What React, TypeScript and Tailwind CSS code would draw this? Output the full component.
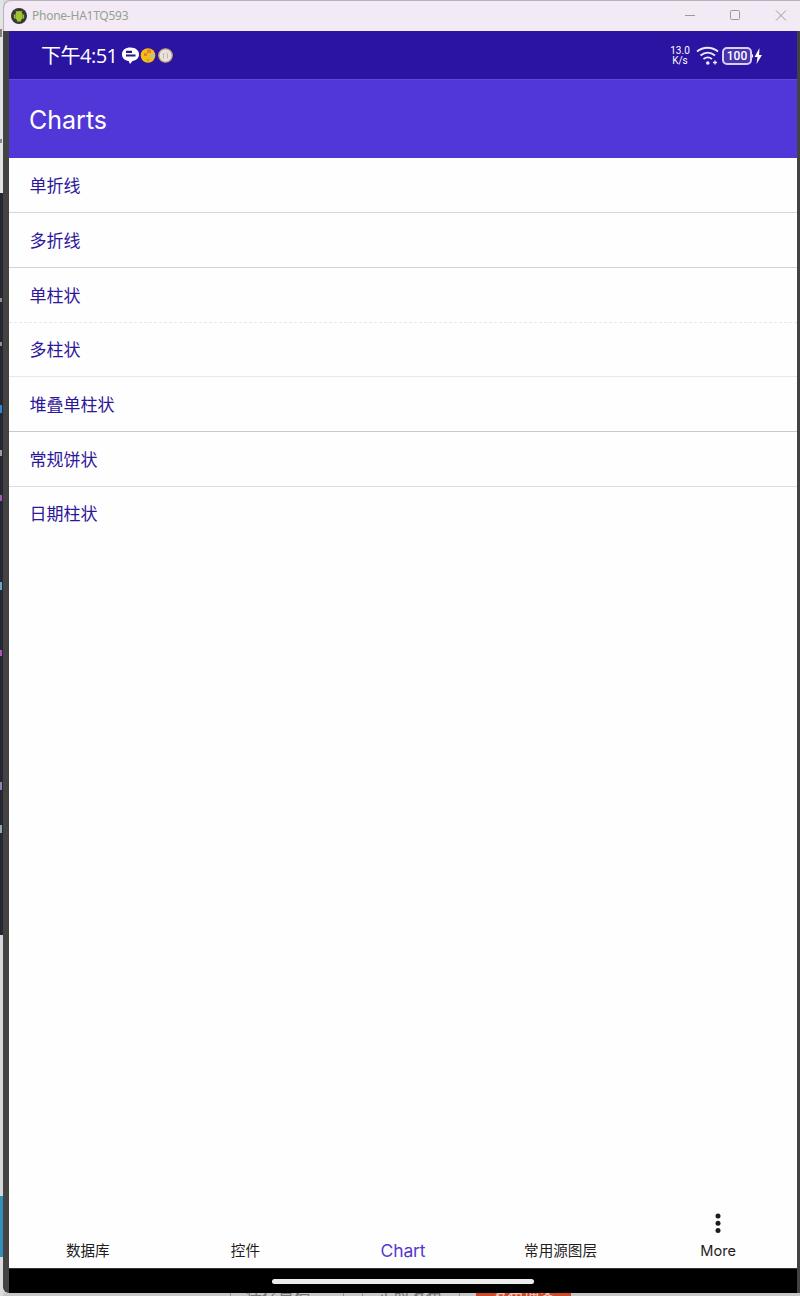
import { clsx } from "clsx";
import type { ReactNode } from "react";

const charts = [
  { label: "单折线", height: "h-[55px]", line: "border-[#d6d6d8]" },
  { label: "多折线", height: "h-[55px]", line: "border-[#d4d4d8]" },
  { label: "单柱状", height: "h-[55px]", line: "border-dashed border-[#e8e6fa]" },
  { label: "多柱状", height: "h-[54px]", line: "border-[#e8e8ea]" },
  { label: "堆叠单柱状", height: "h-[55px]", line: "border-[#c8c8ca]" },
  { label: "常规饼状", height: "h-[55px]", line: "border-[#dcdce2]" },
  { label: "日期柱状", height: "h-[54px]", line: "border-transparent" },
];

export default function App() {
  return (
    <div className="flex h-[1296px] w-[800px] overflow-hidden bg-[#d9d9dc] font-['Noto_Sans','Noto_Sans_CJK_SC',sans-serif]">
      <DesktopEdge />
      <div className="flex w-[797px] flex-col">
        <TitleBar />
        <div className="flex h-[1262px] flex-col overflow-hidden rounded-bl-md border-r-[3px] border-l-[6px] border-[#444342] bg-[#fefefe]">
          <StatusBar />
          <header className="flex h-[79px] items-center border-t border-[#5f49dc] bg-[#5237d8] px-5 pt-1 font-['Inter',sans-serif] text-[25px] text-white">
            Charts
          </header>
          <ul className="flex-1">
            {charts.map((c) => (
              <li
                key={c.label}
                className={clsx(
                  "flex items-center border-b pl-[20.5px] text-[17px] leading-none text-[#2c1799]",
                  c.height,
                  c.line,
                )}
              >
                {c.label}
              </li>
            ))}
          </ul>
          <BottomNav />
          <div className="flex h-[25px] items-center justify-center border-t border-[#333] bg-black">
            <div className="h-[5px] w-[262px] rounded-full bg-[#ececec]" />
          </div>
        </div>
        <Underlay />
      </div>
    </div>
  );
}

/** Sliver of the windows that sit behind the emulator on the left. */
function DesktopEdge() {
  return (
    <div className="flex w-[3px] shrink-0 flex-col">
      <div className="flex h-[193px] flex-col bg-[#e2e4e6]">
        <i className="mt-[29px] h-2 w-0.5 bg-[#8a8078]" />
        <i className="mt-[102px] h-1 w-0.5 bg-[#7c8c98]" />
      </div>
      <div className="flex h-[742px] flex-col bg-[#242832]">
        <i className="mt-[105px] h-1 w-0.5 bg-[#9a8c80]" />
        <i className="mt-10 h-1 w-0.5 bg-[#9a8c80]" />
        <i className="mt-[59px] h-2 w-0.5 bg-[#2c87d2]" />
        <i className="mt-[37px] h-1.5 w-0.5 bg-[#a09a90]" />
        <i className="mt-[39px] h-1.5 w-0.5 bg-[#a957b8]" />
        <i className="mt-[81px] h-2 w-0.5 bg-[#6ca6c0]" />
        <i className="mt-[60px] h-1.5 w-0.5 bg-[#a957b8]" />
        <i className="mt-[126px] h-2 w-0.5 bg-[#8a84b0]" />
        <i className="mt-[35px] h-2 w-0.5 bg-[#90a8a8]" />
      </div>
      <div className="h-[261px] bg-[#d6d7d9]" />
      <div className="h-[61px] bg-[#338fba]" />
      <div className="flex-1 bg-[#dcdcde]" />
    </div>
  );
}

function TitleBar() {
  return (
    <div className="flex h-[31px] items-center rounded-tl-lg border-t border-l border-[#b6b2ba] bg-[#f3eaf6] pl-[7px]">
      <svg width="16" height="16" viewBox="0 0 16 16">
        <circle cx="8" cy="8" r="8" fill="#343638" />
        <path d="M5.8 4.5 5 2.8M10.2 4.500 11 2.800" stroke="#9bbd2f" />
        <path d="M4.500 6.500a3.500 3.500 0 0 1 7 0v4.500l-1.500.8v1.700H6v-1.700L4.500 11z" fill="#a0c52e" />
        <path d="M3.600 6.500v4M12.400 6.500v4" stroke="#a0c52e" strokeWidth="1.500" />
      </svg>
      <span className="ml-[5px] font-['Noto_Sans',sans-serif] text-[12px] leading-none tracking-[-0.25px] text-[#95a192]">
        Phone-HA1TQ593
      </span>
      <svg className="ml-auto" width="117" height="30" viewBox="0 0 117 30" fill="none" stroke="#93a18d">
        <path d="M2 14.500h10" />
        <rect x="47.500" y="9.500" width="9" height="9" rx="1" />
        <path d="m93 9.500 10 10m0-10-10 10" />
      </svg>
    </div>
  );
}

function StatusBar() {
  return (
    <div className="flex h-12 items-center bg-[#2b14a1] pt-px text-white">
      <span className="ml-8 w-[80px] pt-px font-['Open_Sans','Noto_Sans_CJK_SC',sans-serif] text-[20px] leading-none tracking-[-0.5px] whitespace-nowrap">
        下午4:51
      </span>
      <svg width="53" height="20" viewBox="0 0 53 20">
        <path d="M9.500 1.500c5 0 8.500 2.800 8.500 6.800s-3 6.300-6.500 6.800L9 18l-1.400-2.900C4 14.600 1 12.500 1 8.300S4.500 1.500 9.500 1.500Z" fill="#fff" />
        <path d="M5 5.800h6M5 9.500h9.500" stroke="#2b1490" strokeWidth="2.200" />
        <circle cx="27" cy="9.500" r="7.300" fill="#f8bd14" />
        <path d="M26 3.500h4v3.500h-4zM23 7h3v3h-3z" fill="#e0823a" />
        <circle cx="31" cy="10" r="2.200" fill="#b9c3a0" />
        <path d="M25 13h4l-2 3z" fill="#b5b32a" />
        <circle cx="44.500" cy="9.500" r="6.700" fill="#e6e4e2" stroke="#c2a878" strokeWidth="1.300" />
        <path d="M42.500 12.500V7.500M46.500 12.500V7.500M41.500 8h2M45.500 7h1" fill="none" stroke="#cdb59b" />
      </svg>
      <div className="ml-auto flex items-center pr-[34px]">
        <div className="w-[24px] text-center font-['Roboto',sans-serif] text-[10px] leading-[10px]">
          13.0
          <br />
          K/s
        </div>
        <svg className="ml-1" width="24" height="20" viewBox="0 0 24 20" fill="none" stroke="#eeeaff" strokeWidth="1.800">
          <path d="M1 5.500c6-5 15-5 21 0M4.500 9.500c4.500-3.600 10-3.600 14.500 0M7.500 13c2.800-2.100 5.800-2.100 8.500 0" />
          <circle cx="11.800" cy="17" r="1.800" fill="#eeeaff" stroke="none" />
          <path d="M19 14.500v4M17 16.500h4" strokeWidth="1.300" />
        </svg>
        <div className="ml-0.5 flex h-[18px] w-[30px] items-center justify-center rounded-[5px] border-2 border-[#d8d0f6] bg-[#4a34ad] font-['Roboto',sans-serif] text-[12px] leading-none font-medium">
          100
        </div>
        <svg width="11" height="18" viewBox="0 0 11 18" fill="#fff">
          <path d="M0 7c1.500.5 1.500 3.500 0 4zM7.500 1 2.500 10h3L4.500 17l5.500-9H7z" />
        </svg>
      </div>
    </div>
  );
}

function NavItem({ icon, active, children }: { icon?: ReactNode; active?: boolean; children: ReactNode }) {
  return (
    <div
      className={clsx(
        "flex flex-1 flex-col items-center justify-end",
        active
          ? "font-['Inter',sans-serif] text-[17.5px] tracking-[-0.1px] text-[#5438d2]"
          : "text-[14.6px] text-[#1f1d22]",
      )}
    >
      {icon}
      <span className="flex h-[35px] items-center leading-none whitespace-nowrap">{children}</span>
    </div>
  );
}

function BottomNav() {
  return (
    <nav className="flex h-[72px] shrink-0">
      <NavItem>数据库</NavItem>
      <NavItem>控件</NavItem>
      <NavItem active>Chart</NavItem>
      <NavItem>常用源图层</NavItem>
      <NavItem
        icon={
          <svg width="6" height="22" viewBox="0 0 6 22" fill="#1e1c21">
            <circle cx="3" cy="5" r="2.500" />
            <circle cx="3" cy="12.300" r="2.500" />
            <circle cx="3" cy="19.500" r="2.500" />
          </svg>
        }
      >
        <span className="pt-0.5 font-['Inter',sans-serif]">More</span>
      </NavItem>
    </nav>
  );
}

/** Page buttons peeking out below the emulator window. */
function Underlay() {
  return (
    <div className="flex h-[3px] overflow-hidden bg-[#c8c6c8] text-[16px] leading-[3px] text-[#77757a]">
      <span className="ml-[227px] w-[114px] border-x border-[#98969b] pl-[15px]">保存草稿</span>
      <span className="ml-[18px] w-[98px] border-x border-[#98969b] pl-[15px]">定时发布</span>
      <span className="ml-[16px] w-[95px] bg-[#d04a25] text-center text-[#eec6b8]">发布博客</span>
    </div>
  );
}
